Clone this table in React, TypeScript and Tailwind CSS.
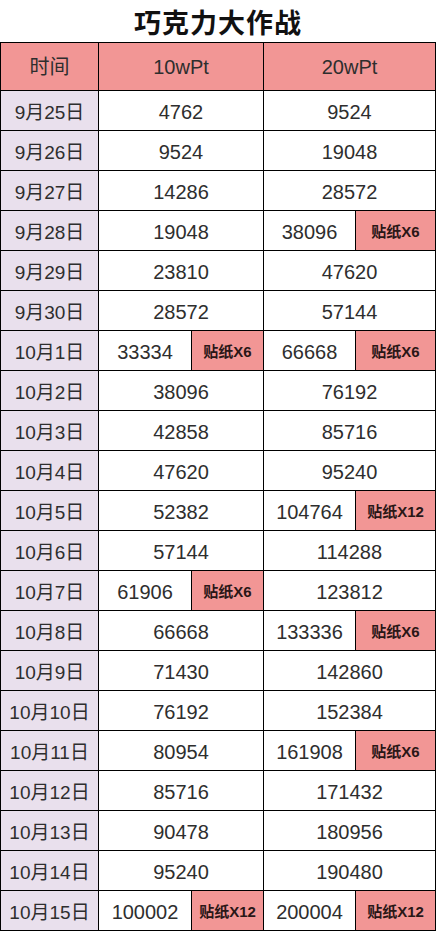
import React from "react";

type Cell = { value: string; sticker?: string };

interface Row {
  date: string;
  a: Cell;
  b: Cell;
}

const rows: Row[] = [
  { date: "9月25日", a: { value: "4762" }, b: { value: "9524" } },
  { date: "9月26日", a: { value: "9524" }, b: { value: "19048" } },
  { date: "9月27日", a: { value: "14286" }, b: { value: "28572" } },
  { date: "9月28日", a: { value: "19048" }, b: { value: "38096", sticker: "贴纸X6" } },
  { date: "9月29日", a: { value: "23810" }, b: { value: "47620" } },
  { date: "9月30日", a: { value: "28572" }, b: { value: "57144" } },
  { date: "10月1日", a: { value: "33334", sticker: "贴纸X6" }, b: { value: "66668", sticker: "贴纸X6" } },
  { date: "10月2日", a: { value: "38096" }, b: { value: "76192" } },
  { date: "10月3日", a: { value: "42858" }, b: { value: "85716" } },
  { date: "10月4日", a: { value: "47620" }, b: { value: "95240" } },
  { date: "10月5日", a: { value: "52382" }, b: { value: "104764", sticker: "贴纸X12" } },
  { date: "10月6日", a: { value: "57144" }, b: { value: "114288" } },
  { date: "10月7日", a: { value: "61906", sticker: "贴纸X6" }, b: { value: "123812" } },
  { date: "10月8日", a: { value: "66668" }, b: { value: "133336", sticker: "贴纸X6" } },
  { date: "10月9日", a: { value: "71430" }, b: { value: "142860" } },
  { date: "10月10日", a: { value: "76192" }, b: { value: "152384" } },
  { date: "10月11日", a: { value: "80954" }, b: { value: "161908", sticker: "贴纸X6" } },
  { date: "10月12日", a: { value: "85716" }, b: { value: "171432" } },
  { date: "10月13日", a: { value: "90478" }, b: { value: "180956" } },
  { date: "10月14日", a: { value: "95240" }, b: { value: "190480" } },
  { date: "10月15日", a: { value: "100002", sticker: "贴纸X12" }, b: { value: "200004", sticker: "贴纸X12" } },
];

const font = { fontFamily: '"Liberation Sans", "Noto Sans CJK SC", sans-serif' };

function ValueCells({ cell }: { cell: Cell }) {
  if (!cell.sticker) {
    return (
      <div className="col-span-2 flex items-center justify-center bg-white pt-[3px] text-[20px] leading-none text-[#2e2e2e]">
        {cell.value}
      </div>
    );
  }
  return (
    <>
      <div className="flex items-center justify-center bg-white pt-[3px] text-[20px] leading-none text-[#2e2e2e]">
        {cell.value}
      </div>
      <div className="flex items-center justify-center bg-[#f29695] pt-[2px] text-[15px] leading-none font-bold text-[#2a1717]">
        {cell.sticker}
      </div>
    </>
  );
}

export default function App() {
  return (
    <div className="h-[931px] w-[436px] bg-white" style={font}>
      <div className="flex h-[42px] items-center justify-center pt-[6px] text-[27px] leading-none font-bold tracking-[1px] text-[#111]">
        巧克力大作战
      </div>
      <div className="grid grid-cols-[97px_92px_71px_91px_79px] grid-rows-[47px_repeat(21,39px)] gap-px bg-black p-px">
        <div className="flex items-center justify-center bg-[#f29695] text-[20px] leading-none text-[#2e2e2e]">
          时间
        </div>
        <div className="col-span-2 flex items-center justify-center bg-[#f29695] text-[20px] leading-none text-[#2e2e2e]">
          10wPt
        </div>
        <div className="col-span-2 flex items-center justify-center bg-[#f29695] text-[20px] leading-none text-[#2e2e2e]">
          20wPt
        </div>
        {rows.map((row) => (
          <React.Fragment key={row.date}>
            <div className="flex items-center justify-center bg-[#e9e0ed] pt-[3px] text-[19px] leading-none text-[#2e2e2e]">
              {row.date}
            </div>
            <ValueCells cell={row.a} />
            <ValueCells cell={row.b} />
          </React.Fragment>
        ))}
      </div>
    </div>
  );
}
